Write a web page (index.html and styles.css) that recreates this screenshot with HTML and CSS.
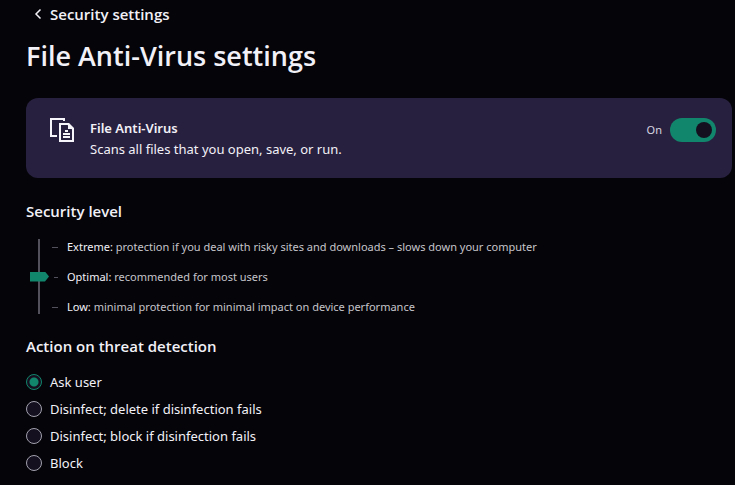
FILE: index.html
```html
<!DOCTYPE html>
<html lang="en">
<head>
<meta charset="utf-8">
<meta name="viewport" content="width=device-width, initial-scale=1">
<title>File Anti-Virus settings</title>
<link rel="stylesheet" href="styles.css">
</head>
<body>
<main class="page">
  <a class="back" href="#">
    <svg class="back-icon" viewBox="0 0 8 12" aria-hidden="true"><path d="M6.500 1.500 2 6l4.500 4.500"/></svg>
    <span>Security settings</span>
  </a>
  <h1 class="title">File Anti-Virus settings</h1>

  <section class="card">
    <svg class="card-icon" viewBox="0 0 24 24" aria-hidden="true">
      <path class="line" d="M7 18H1V1h13v2"/>
      <path class="line" d="M10 6h8l5 5v12H10z"/>
      <path class="solid" d="M18 5h1l5 5v1h-6zM15 12h3v2h-3zM13 15h7v2h-7zM13 18h7v2h-7z"/>
    </svg>
    <div class="card-text">
      <label class="card-title" for="protection">File Anti-Virus</label>
      <span class="card-note">Scans all files that you open, save, or run.</span>
    </div>
    <label class="switch-label" for="protection">On</label>
    <input class="switch" id="protection" type="checkbox" role="switch" checked>
  </section>

  <section class="group">
    <h2 class="heading" id="level-heading">Security level</h2>
    <div class="level">
      <input class="slider" type="range" min="0" max="2" step="1" value="1" aria-labelledby="level-heading">
      <ul class="marks">
        <li class="mark"><span><b>Extreme:</b> protection if you deal with risky sites and downloads – slows down your computer</span></li>
        <li class="mark current"><span><b>Optimal:</b> recommended for most users</span></li>
        <li class="mark"><span><b>Low:</b> minimal protection for minimal impact on device performance</span></li>
      </ul>
    </div>
  </section>

  <section class="group actions">
    <h2 class="heading" id="action-heading">Action on threat detection</h2>
    <div class="options" role="radiogroup" aria-labelledby="action-heading">
      <label class="option"><input class="radio" type="radio" name="action" checked>Ask user</label>
      <label class="option"><input class="radio" type="radio" name="action">Disinfect; delete if disinfection fails</label>
      <label class="option"><input class="radio" type="radio" name="action">Disinfect; block if disinfection fails</label>
      <label class="option"><input class="radio" type="radio" name="action">Block</label>
    </div>
  </section>
</main>
</body>
</html>
```
FILE: styles.css
```css
* {
  box-sizing: border-box;
}

body {
  margin: 0;
  background: #050409;
  color: #f2f1f7;
  font: 13px/20px "Noto Sans", "Open Sans", sans-serif;
}

.page {
  padding: 4px 3px 8px 26px;
}

.back,
.title,
.heading {
  font-family: "Open Sans", "Noto Sans", sans-serif;
  font-weight: 600;
}

.back {
  display: flex;
  align-items: center;
  gap: 8px;
  padding-left: 8px;
  color: inherit;
  font-size: 15px;
  text-decoration: none;
}

.back-icon {
  width: 8px;
  height: 12px;
  fill: none;
  stroke: currentColor;
  stroke-width: 1.5;
}

.title {
  margin: 12px 0 22px;
  font-size: 27px;
  line-height: 40px;
}

.card {
  display: flex;
  align-items: flex-start;
  padding: 20px 16px 18px 24px;
  border-radius: 12px;
  background: #28203f;
}

.card-icon {
  width: 24px;
  height: 24px;
  margin-right: 16px;
}

.line {
  fill: none;
  stroke: #f7f6fb;
  stroke-width: 2;
}

.solid {
  fill: #f7f6fb;
}

.card-text {
  display: flex;
  flex: 1;
  flex-direction: column;
  line-height: 21px;
}

.card-title {
  font-weight: 600;
}

.switch-label {
  margin-right: 8px;
  color: #d8d6e0;
  font-size: 11px;
  line-height: 24px;
}

.switch {
  display: flex;
  align-items: center;
  width: 46px;
  height: 24px;
  margin: 0;
  padding: 4px;
  border-radius: 12px;
  background: #5b5866;
  appearance: none;
}

.switch::before {
  width: 16px;
  height: 16px;
  border-radius: 50%;
  background: #151020;
  content: "";
}

.switch:checked {
  justify-content: flex-end;
  background: #12866d;
}

.group {
  margin-top: 21px;
}

.actions {
  margin-top: 19px;
}

.heading {
  margin: 0;
  font-size: 15px;
  line-height: 24px;
}

.level {
  display: flex;
  align-items: flex-start;
  gap: 3px;
  margin-top: 16px;
  padding-left: 4px;
}

.slider {
  width: 19px;
  height: 75px;
  margin: 0;
  background: linear-gradient(#53515c, #53515c) 8px 0 / 2px 100% no-repeat;
  appearance: none;
  direction: rtl;
  writing-mode: vertical-lr;
}

.slider::-webkit-slider-thumb {
  width: 19px;
  height: 10px;
  background: #12866d;
  clip-path: polygon(0 0, 15px 0, 19px 5px, 15px 10px, 0 10px);
  appearance: none;
}

.marks {
  display: grid;
  gap: 14px;
  margin: 0;
  padding: 0;
  color: #c6c5cb;
  font-size: 11px;
  line-height: 16px;
  list-style: none;
}

.mark {
  display: flex;
  align-items: center;
}

.mark::before {
  width: 6px;
  height: 1px;
  margin-right: 9px;
  background: #53515c;
  content: "";
}

.current::before {
  width: 4px;
  margin-left: 2px;
}

.mark b {
  color: #f2f1f7;
  font-weight: 400;
}

.options {
  display: grid;
  gap: 7px;
  margin-top: 14px;
}

.option {
  display: flex;
  align-items: center;
  gap: 8px;
}

.radio {
  width: 16px;
  height: 16px;
  margin: 0;
  border: 1px solid #a3a1ae;
  border-radius: 50%;
  background: #14101f;
  appearance: none;
}

.radio:checked {
  border-color: #12866d;
  background: radial-gradient(circle, #12866d 4px, #14101f 5px);
}
```
